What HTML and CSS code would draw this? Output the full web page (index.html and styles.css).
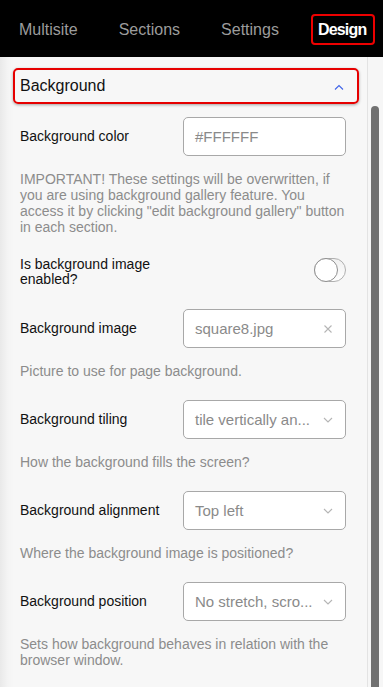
FILE: index.html
```html
<!DOCTYPE html>
<html lang="en">
<head>
    <meta charset="UTF-8">
    <meta name="viewport" content="width=device-width, initial-scale=1.0">
    <title>Design settings</title>
    <link rel="stylesheet" href="styles.css">
</head>
<body>
    <div class="topbar">
        <a class="tab">Multisite</a>
        <a class="tab">Sections</a>
        <a class="tab">Settings</a>
        <a class="tab active">Design</a>
    </div>
    <div class="panel">
        <div class="content">
            <div class="section-head">
                <span>Background</span>
                <svg class="chevron-up" width="10" height="6" viewBox="0 0 10 6">
                    <path d="M1 5.5 L5 1.5 L9 5.5" fill="none" stroke="#3f63e8" stroke-width="1.1"/>
                </svg>
            </div>

            <div class="field">
                <div class="row">
                    <label>Background color</label>
                    <div class="input">#FFFFFF</div>
                </div>
                <p class="help">IMPORTANT! These settings will be overwritten, if you are using background gallery feature. You access it by clicking "edit background gallery" button in each section.</p>
            </div>

            <div class="field">
                <div class="row">
                    <label>Is background image enabled?</label>
                    <div class="toggle-wrap">
                        <div class="toggle"><div class="knob"></div></div>
                    </div>
                </div>
            </div>

            <div class="field">
                <div class="row">
                    <label>Background image</label>
                    <div class="input">
                        <span class="value">square8.jpg</span>
                        <svg class="icon" width="10" height="10" viewBox="0 0 10 10">
                            <path d="M1.5 1.5 L8.5 8.5 M8.5 1.5 L1.5 8.5" stroke="#b5b5b5" stroke-width="1.1"/>
                        </svg>
                    </div>
                </div>
                <p class="help">Picture to use for page background.</p>
            </div>

            <div class="field">
                <div class="row">
                    <label>Background tiling</label>
                    <div class="input">
                        <span class="value">tile vertically an...</span>
                        <svg class="icon" width="10" height="6" viewBox="0 0 10 6">
                            <path d="M1 1 L5 5 L9 1" fill="none" stroke="#b5b5b5" stroke-width="1.1"/>
                        </svg>
                    </div>
                </div>
                <p class="help">How the background fills the screen?</p>
            </div>

            <div class="field">
                <div class="row">
                    <label>Background alignment</label>
                    <div class="input">
                        <span class="value">Top left</span>
                        <svg class="icon" width="10" height="6" viewBox="0 0 10 6">
                            <path d="M1 1 L5 5 L9 1" fill="none" stroke="#b5b5b5" stroke-width="1.1"/>
                        </svg>
                    </div>
                </div>
                <p class="help">Where the background image is positioned?</p>
            </div>

            <div class="field">
                <div class="row">
                    <label>Background position</label>
                    <div class="input">
                        <span class="value">No stretch, scro...</span>
                        <svg class="icon" width="10" height="6" viewBox="0 0 10 6">
                            <path d="M1 1 L5 5 L9 1" fill="none" stroke="#b5b5b5" stroke-width="1.1"/>
                        </svg>
                    </div>
                </div>
                <p class="help">Sets how background behaves in relation with the browser window.</p>
            </div>
        </div>
        <div class="gutter">
            <div class="thumb"></div>
        </div>
    </div>
</body>
</html>
```

FILE: styles.css
```css
body {
    font-family: "Liberation Sans", Arial, sans-serif;
    margin: 0;
    padding: 0;
    height: 100vh;
    overflow: hidden;
    display: flex;
    flex-direction: column;
    background-color: #f7f7f7;
}

.topbar {
    height: 57px;
    flex-shrink: 0;
    background-color: #000;
    display: flex;
    align-items: center;
    gap: 27px;
    padding-left: 12px;
}

.tab {
    font-size: 16px;
    line-height: 19px;
    color: #9c9c9c;
    padding: 4px 5px;
    border: 2px solid transparent;
    border-radius: 4px;
    margin-top: 1px;
}

.tab.active {
    color: #fff;
    font-weight: bold;
    letter-spacing: -0.8px;
    border-color: #ee0000;
    padding: 4px 7px 4px 5px;
    margin-left: -2px;
}

.panel {
    flex: 1;
    display: flex;
    min-height: 0;
}

.content {
    flex: 1;
    min-width: 0;
    background: linear-gradient(to right, #e9e9e9 0, #f4f4f4 8px, #f7f7f7 14px);
}

.section-head {
    margin: 11px 8px 0 13px;
    height: 32px;
    border: 2px solid #e60000;
    border-radius: 5px;
    box-shadow: 0 1px 3px rgba(0, 0, 0, 0.35);
    display: flex;
    align-items: center;
    justify-content: space-between;
    padding: 0 13px 0 5px;
    font-size: 16px;
    color: #111;
}

.chevron-up {
    margin-top: 1px;
}

.field {
    padding: 0 21px 0 20px;
    margin-top: 13px;
    margin-bottom: 21px;
}

.field + .field {
    margin-top: 0;
}

.row {
    display: flex;
    align-items: center;
}

.row label {
    width: 163px;
    flex-shrink: 0;
    font-size: 14px;
    line-height: 15px;
    color: #111;
    padding-right: 20px;
    box-sizing: border-box;
}

.input {
    flex: 1;
    min-width: 0;
    height: 39px;
    box-sizing: border-box;
    background-color: #fff;
    border: 1px solid #a8a8a8;
    border-radius: 5px;
    display: flex;
    align-items: center;
    padding: 0 12px 0 11px;
    font-size: 15px;
    color: #8a8a8a;
}

.value {
    flex: 1;
    white-space: nowrap;
    padding-right: 4px;
}

.icon {
    flex-shrink: 0;
}

.help {
    margin: 15px 0 0 0;
    font-size: 14px;
    line-height: 16px;
    color: #8c8c8c;
}

.toggle-wrap {
    flex: 1;
    display: flex;
    justify-content: flex-end;
    padding: 2px 0 6px;
}

.toggle {
    width: 32px;
    height: 24px;
    box-sizing: border-box;
    border: 1px solid #b0b0b0;
    border-radius: 12px;
    background: linear-gradient(#f0f0f0, #ffffff);
    position: relative;
}

.knob {
    position: absolute;
    left: -1px;
    top: -1px;
    width: 24px;
    height: 24px;
    box-sizing: border-box;
    border-radius: 50%;
    border: 1.5px solid #8f8f8f;
    background-color: #fff;
}

.gutter {
    width: 16px;
    flex-shrink: 0;
    box-sizing: border-box;
    border-left: 1px solid #e3e3e3;
    background-color: #f6f6f6;
    padding: 49px 4px 0 3px;
}

.thumb {
    height: 100%;
    background-color: #717171;
    border-radius: 4px 4px 0 0;
}
```
